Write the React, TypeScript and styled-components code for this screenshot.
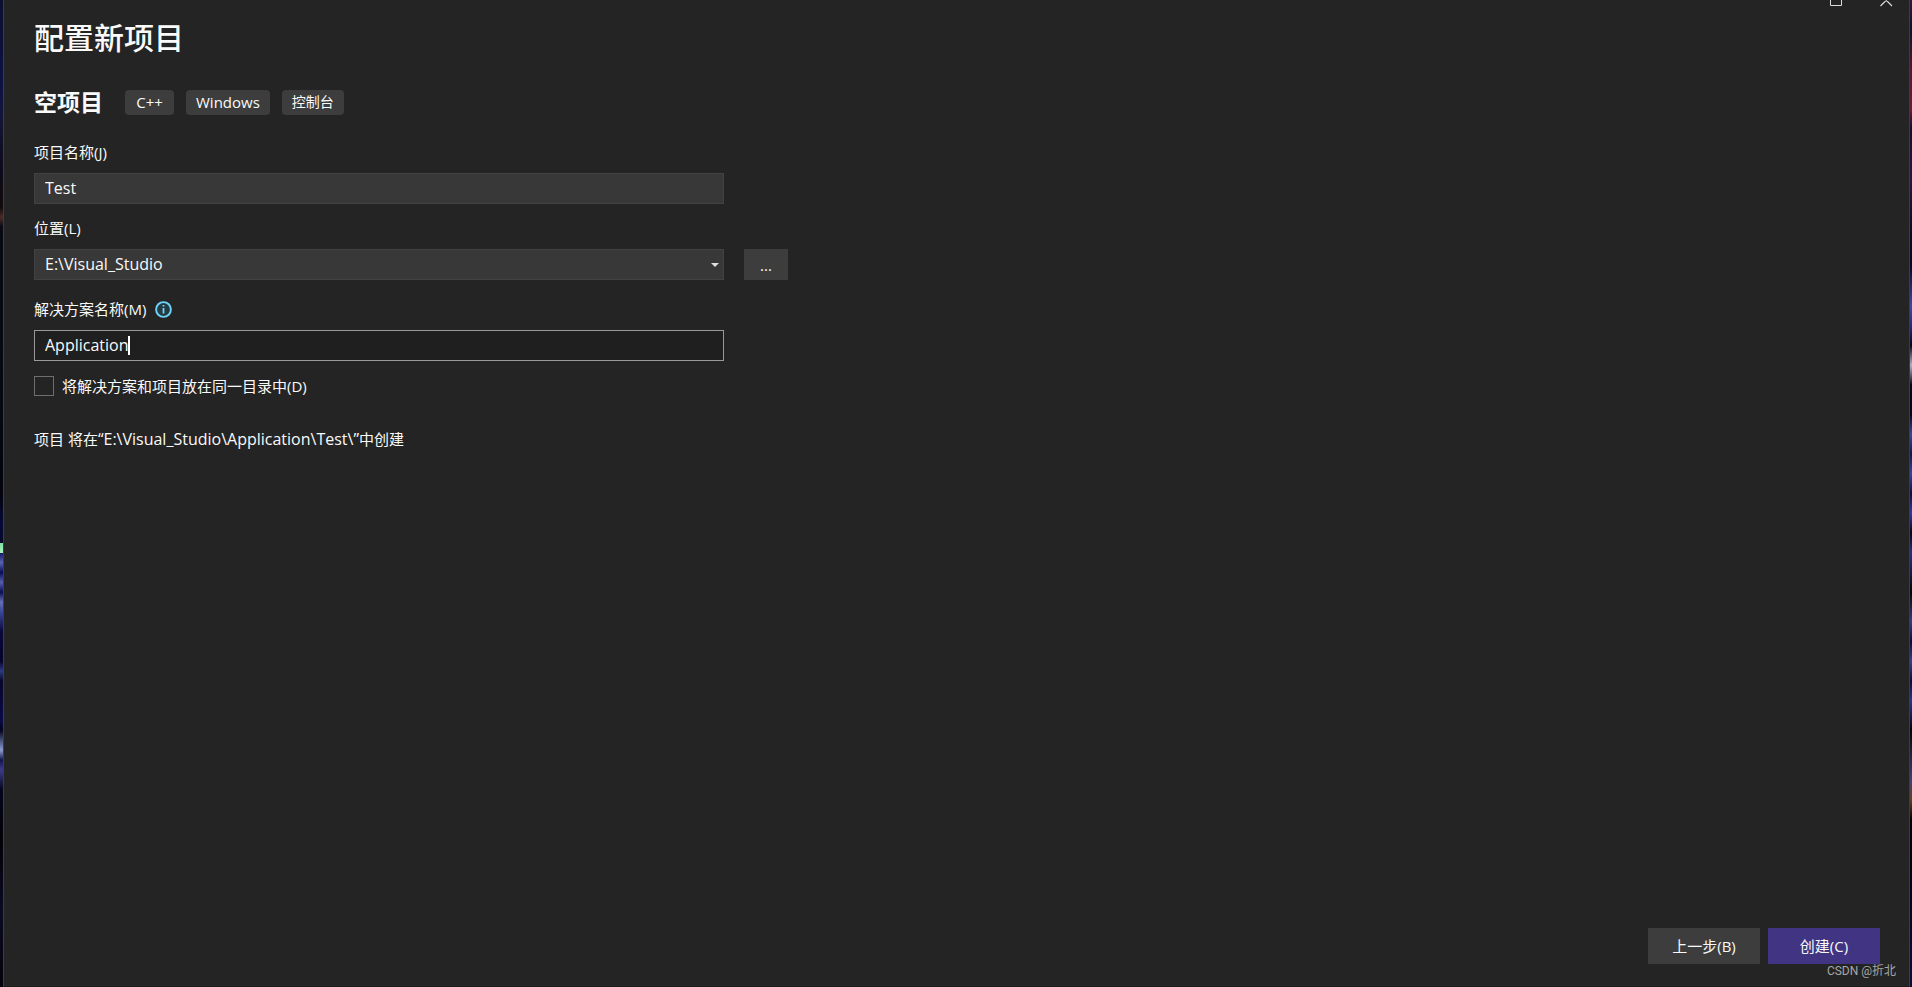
import React, { useLayoutEffect, useRef, useState } from 'react';
import styled, { createGlobalStyle } from 'styled-components';

const fontStack = '"Open Sans", "Noto Sans CJK SC", sans-serif';

const GlobalStyle = createGlobalStyle`
  *, *::before, *::after { box-sizing: border-box; }
  body { margin: 0; background: #05060f; }
  button, input, select { font: inherit; color: inherit; }
`;

const Desktop = styled.div`
  display: flex;
  min-height: 100vh;
  color: #fafafa;
  font: 15px/20px ${fontStack};
`;

const LeftWallpaper = styled.div`
  flex: 0 0 3px;
  background: linear-gradient(
    #0a1030 0%, #0c1244 9%, #141638 12%, #0c0a1c 17%, #120a0c 21%, #4a2c28 22%,
    #070a14 23%, #040a14 40%, #03040c 50%, #060a38 53%, #05062a 55%,
    #7fe0a0 55%, #a8f0c0 56%, #10145c 56%, #5a64b4 57%, #0a0c54 58%, #5560b0 59%,
    #0a0c50 60%, #6470b8 61%, #3a4698 62%, #08083c 64%, #04042c 67%, #2c3a80 68%,
    #06062c 69%, #0a0a48 73%, #030320 74%, #8a9cd0 76%, #12164c 77%, #3c3c88 78%,
    #05061c 80%, #020208 85%, #0a0a22 92%, #04040c 100%
  );
`;

const RightWallpaper = styled.div`
  flex: 0 0 2px;
  background: linear-gradient(
    #32163a 0%, #10102c 3%, #501834 7%, #6a1c3a 11%, #180c30 13%, #281440 18%,
    #0a0a20 24%, #080828 27%, #4048a0 31%, #282a80 33%, #05051c 35%, #b0b0c8 37%,
    #06061c 39%, #04041c 42%, #3c4898 44%, #10164c 46%, #3844a4 48%, #0c0e40 50%,
    #3438a0 52%, #04041c 54%, #283080 56%, #04040c 60%, #343c80 63%, #0a0c38 65%,
    #384088 67%, #0c0c38 69%, #28348c 71%, #04040c 74%, #404070 79%, #604028 81%,
    #04040c 83%, #03031c 90%, #0c0c3c 100%
  );
`;

const Dialog = styled.div`
  position: relative;
  flex: 1;
  display: flex;
  flex-direction: column;
  background: #242424;
  border: solid #3d3d3d;
  border-width: 0 1px;
  border-bottom: 1px solid #1c1c1c;
`;

const WindowControls = styled.div`
  position: absolute;
  top: 0;
  right: 16px;
  display: flex;
  gap: 36px;
`;

const WindowButton = styled.button`
  display: block;
  width: 14px;
  height: 8px;
  padding: 0;
  border: 0;
  background: none;
  svg { display: block; }
`;

const Main = styled.main`
  flex: 1;
  padding: 16px 30px 0;
`;

const Title = styled.h1`
  margin: 0;
  font-size: 30px;
  line-height: 44px;
  font-weight: 500;
`;

const Template = styled.div`
  display: flex;
  align-items: center;
  margin-top: 24px;
  height: 36px;
`;

const TemplateName = styled.h2`
  margin: 0 22px 0 0;
  font-size: 23px;
  line-height: 36px;
  font-weight: 700;
`;

const Tags = styled.ul`
  display: flex;
  gap: 12px;
  margin: 0;
  padding: 0;
  list-style: none;
`;

const Tag = styled.li<{ $small?: boolean }>`
  min-width: 49px;
  padding: 2px 10px 3px;
  border-radius: 4px;
  background: #3d3d3d;
  font-size: ${(p) => (p.$small ? 14 : 15)}px;
  line-height: 20px;
  text-align: center;
`;

const Field = styled.div<{ $gap: number }>`
  margin-top: ${(p) => p.$gap}px;
`;

const FieldHeader = styled.div`
  display: flex;
  align-items: center;
  gap: 9px;
  height: 20px;
  margin-bottom: 11px;
`;

const InfoIcon = styled.svg`
  display: block;
`;

const FieldRow = styled.div`
  display: flex;
  gap: 20px;
`;

const Control = styled.div`
  position: relative;
  flex: 0 1 690px;
  min-width: 0;
`;

const TextBox = styled.input<{ $active?: boolean }>`
  display: block;
  width: 100%;
  height: 31px;
  padding: 0 10px 1px;
  border: 1px solid ${(p) => (p.$active ? '#999999' : '#424242')};
  border-radius: 0;
  outline: 0;
  background: ${(p) => (p.$active ? '#1f1f1f' : '#383838')};
  font-size: 16px;
`;

const LocationSelect = styled.select`
  display: block;
  width: 100%;
  height: 31px;
  padding: 0 24px 1px 10px;
  border: 1px solid #424242;
  border-radius: 0;
  outline: 0;
  appearance: none;
  background: #383838;
  font-size: 16px;
`;

const Arrow = styled.svg`
  position: absolute;
  top: 14px;
  right: 5px;
  pointer-events: none;
`;

const Caret = styled.span`
  position: absolute;
  top: 6px;
  width: 2px;
  height: 19px;
  background: #ffffff;
  pointer-events: none;
`;

const Button = styled.button<{ $primary?: boolean }>`
  width: 112px;
  height: 36px;
  padding: 0;
  border: 0;
  background: ${(p) => (p.$primary ? '#413482' : '#3d3d3d')};
`;

const BrowseButton = styled(Button)`
  flex: none;
  width: 44px;
  height: 31px;
`;

const CheckLabel = styled.label`
  display: flex;
  align-items: center;
  gap: 8px;
  width: fit-content;
  margin-top: 15px;
`;

const CheckBox = styled.input`
  appearance: none;
  width: 20px;
  height: 20px;
  margin: 0;
  border: 1px solid #6e6e6e;
  background: #242424;
  &:checked { background: #413482; }
`;

const Summary = styled.p`
  margin: 33px 0 0;
`;

const Path = styled.span`
  font-size: 16px;
`;

const Footer = styled.footer`
  display: flex;
  justify-content: flex-end;
  gap: 8px;
  padding: 0 29px 22px;
`;

const Watermark = styled.span`
  position: absolute;
  right: 13px;
  bottom: 7px;
  color: #a8a8a8;
  font: 12px/16px Roboto, "Noto Sans CJK SC", sans-serif;
`;

export default function App() {
  const [projectName, setProjectName] = useState('Test');
  const [solutionName, setSolutionName] = useState('Application');
  const [caretLeft, setCaretLeft] = useState(0);
  const solutionRef = useRef<HTMLInputElement>(null);

  useLayoutEffect(() => {
    const input = solutionRef.current;
    const context = document.createElement('canvas').getContext('2d');
    if (!input || !context) return;
    context.font = `16px ${fontStack}`;
    setCaretLeft(Math.round(context.measureText(solutionName).width) + 10);
  }, [solutionName]);

  return (
    <Desktop>
      <GlobalStyle />
      <LeftWallpaper />
      <Dialog>
        <WindowControls>
          <WindowButton aria-label="最大化">
            <svg width="14" height="8" viewBox="0 0 14 8" fill="none" stroke="#dcdcdc">
              <path d="M1.5 -6V5.5H12.5V-6" />
            </svg>
          </WindowButton>
          <WindowButton aria-label="关闭">
            <svg width="14" height="8" viewBox="0 0 14 8" fill="none" stroke="#dcdcdc" strokeWidth="1.2">
              <path d="M1.5 6L13 -5.5M1.5 -5.5L13 6" />
            </svg>
          </WindowButton>
        </WindowControls>
        <Main>
          <Title>配置新项目</Title>
          <Template>
            <TemplateName>空项目</TemplateName>
            <Tags>
              <Tag>C++</Tag>
              <Tag>Windows</Tag>
              <Tag $small>控制台</Tag>
            </Tags>
          </Template>
          <Field $gap={22}>
            <FieldHeader>
              <label htmlFor="project">项目名称(J)</label>
            </FieldHeader>
            <FieldRow>
              <Control>
                <TextBox id="project" value={projectName} onChange={(e) => setProjectName(e.target.value)} />
              </Control>
            </FieldRow>
          </Field>
          <Field $gap={14}>
            <FieldHeader>
              <label htmlFor="location">位置(L)</label>
            </FieldHeader>
            <FieldRow>
              <Control>
                <LocationSelect id="location">
                  <option>E:\Visual_Studio</option>
                </LocationSelect>
                <Arrow width="8" height="4" viewBox="0 0 8 4">
                  <path d="M0 0H8L4 4Z" fill="#e0e0e0" />
                </Arrow>
              </Control>
              <BrowseButton>...</BrowseButton>
            </FieldRow>
          </Field>
          <Field $gap={19}>
            <FieldHeader>
              <label htmlFor="solution">解决方案名称(M)</label>
              <InfoIcon width="17" height="17" viewBox="0 0 17 17">
                <circle cx="8.5" cy="8.5" r="7.4" fill="#263a42" stroke="#6cd4f8" strokeWidth="1.9" />
                <path d="M8.5 7V12.5M8.5 4V5.6" stroke="#6cd4f8" strokeWidth="1.8" />
              </InfoIcon>
            </FieldHeader>
            <FieldRow>
              <Control>
                <TextBox
                  id="solution"
                  ref={solutionRef}
                  $active
                  value={solutionName}
                  onChange={(e) => setSolutionName(e.target.value)}
                />
                <Caret style={{ left: caretLeft }} />
              </Control>
            </FieldRow>
          </Field>
          <CheckLabel>
            <CheckBox type="checkbox" />
            将解决方案和项目放在同一目录中(D)
          </CheckLabel>
          <Summary>
            项目 将在<Path>“E:\Visual_Studio\{solutionName}\{projectName}\”</Path>中创建
          </Summary>
        </Main>
        <Footer>
          <Button>上一步(B)</Button>
          <Button $primary>创建(C)</Button>
        </Footer>
        <Watermark>CSDN @折北</Watermark>
      </Dialog>
      <RightWallpaper />
    </Desktop>
  );
}
